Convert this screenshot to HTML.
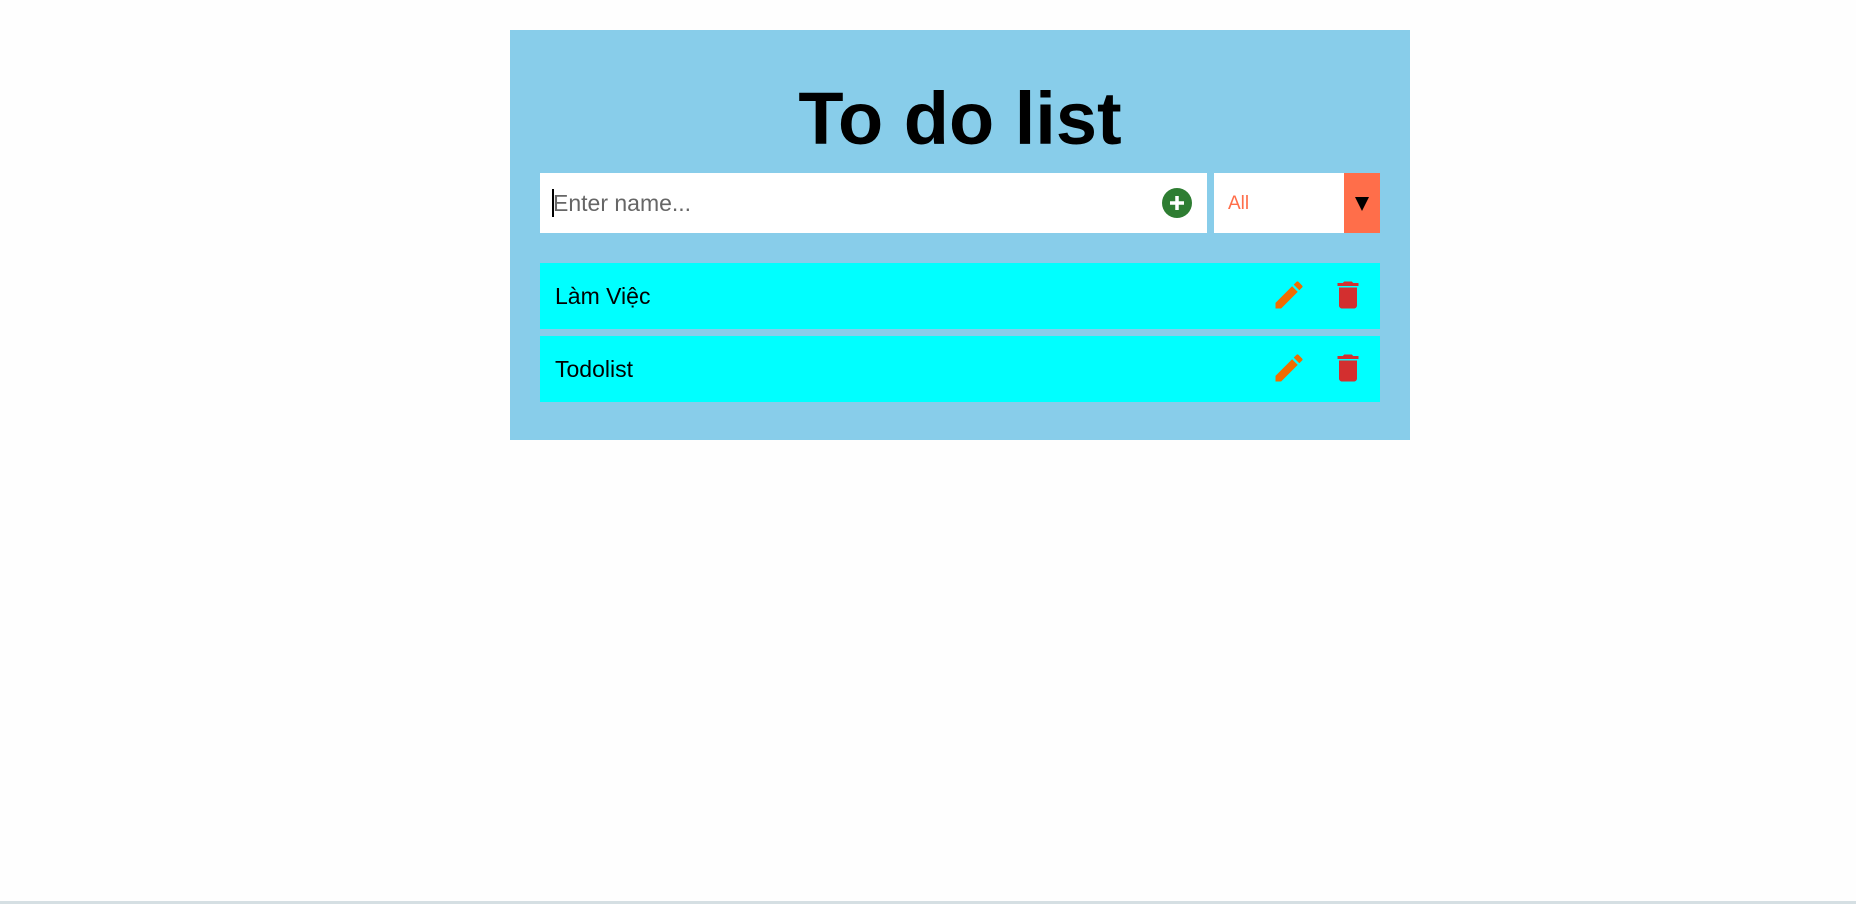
<!DOCTYPE html>
<html><head><meta charset="utf-8"><style>
body{margin:0;background:#fefefe;width:1856px;height:904px;position:relative;overflow:hidden;font-family:"Liberation Sans",Arial,sans-serif}
.panel{position:absolute;left:510px;top:30px;width:900px;height:410px;background:#88cdea}
h1{position:absolute;left:510px;width:900px;top:82px;margin:0;text-align:center;font-size:74px;font-weight:bold;line-height:74px;color:#000}
.inp{position:absolute;left:540px;top:173px;width:667px;height:60px;background:#fff}
.inp span{position:absolute;left:13px;top:17px;font-size:23px;color:#666}
.caret{position:absolute;left:12px;top:16px;width:2px;height:28px;background:#000}
.plus{position:absolute;left:1162px;top:188px;width:30px;height:30px;border-radius:50%;background:#2e7d32}
.sel{position:absolute;left:1214px;top:173px;width:130px;height:60px;background:#fff}
.sel span{position:absolute;left:14px;top:20px;font-size:19px;color:#ff6e4a}
.arr{position:absolute;left:1344px;top:173px;width:36px;height:60px;background:#ff6e4a}
.arr i{position:absolute;left:11px;top:24px;border-left:7px solid transparent;border-right:7px solid transparent;border-top:14px solid #000}
.row{position:absolute;left:540px;width:840px;height:66px;background:#00ffff}
.row span{position:absolute;left:15px;top:20px;font-size:23px;color:#000}
.row svg{position:absolute}
</style></head><body>
<div class="panel"></div>
<h1>To do list</h1>
<div class="inp"><div class="caret"></div><span>Enter name...</span></div>
<div class="plus"><svg width="30" height="30"><path d="M15 8v14M8 15h14" stroke="#fff" stroke-width="3.5"/></svg></div>
<div class="sel"><span>All</span></div>
<div class="arr"><i></i></div>
<div class="row" style="top:263px"><span>Làm Việc</span>
<svg style="left:731px;top:14px" width="36" height="36" viewBox="0 0 24 24"><path fill="#ef6c00" d="M3 17.25V21h3.75L17.81 9.94l-3.75-3.75L3 17.25zM20.71 7.04a1 1 0 000-1.41l-2.34-2.34a1 1 0 00-1.41 0l-1.83 1.83 3.75 3.75 1.83-1.83z"/></svg>
<svg style="left:790px;top:14px" width="36" height="36" viewBox="0 0 24 24"><path fill="#d32f2f" d="M6 19c0 1.1.9 2 2 2h8c1.1 0 2-.9 2-2V7H6v12zM19 4h-3.5l-1-1h-5l-1 1H5v2h14V4z"/></svg></div>
<div class="row" style="top:336px"><span>Todolist</span>
<svg style="left:731px;top:14px" width="36" height="36" viewBox="0 0 24 24"><path fill="#ef6c00" d="M3 17.25V21h3.75L17.81 9.94l-3.75-3.75L3 17.25zM20.71 7.04a1 1 0 000-1.41l-2.34-2.34a1 1 0 00-1.41 0l-1.83 1.83 3.75 3.75 1.83-1.83z"/></svg>
<svg style="left:790px;top:14px" width="36" height="36" viewBox="0 0 24 24"><path fill="#d32f2f" d="M6 19c0 1.1.9 2 2 2h8c1.1 0 2-.9 2-2V7H6v12zM19 4h-3.5l-1-1h-5l-1 1H5v2h14V4z"/></svg></div>
<div style="position:absolute;left:0;top:901px;width:1856px;height:3px;background:#d5dfe3"></div>
</body></html>
